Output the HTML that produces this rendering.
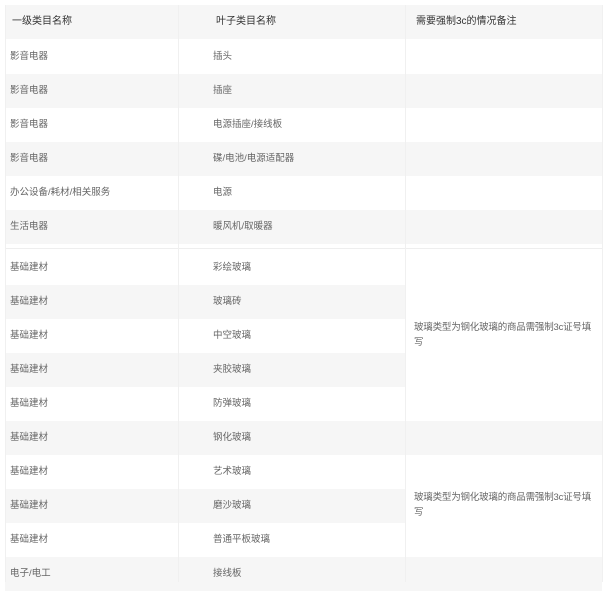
<!DOCTYPE html>
<html><head><meta charset="utf-8"><style>
body{margin:0;background:#fff;width:608px;height:582px;overflow:hidden;font-family:"Liberation Sans","Noto Sans CJK SC",sans-serif;}
.r{position:absolute;left:5px;width:597px;height:34px;}
.g{background:#f6f6f6}
.c{position:absolute;top:0;height:34px;line-height:34px;font-size:9.5px;color:#666;white-space:nowrap}
.c1{left:5px}.c2{left:208px}.c3{left:413px}
.vl{position:absolute;width:1px;background:#f0f0f0}
.m{position:absolute;left:405px;width:197px;background:#fff;font-size:9.5px;color:#666;line-height:15px;padding:0 0 0 9px;box-sizing:border-box;letter-spacing:-0.2px;white-space:nowrap}
</style></head><body>
<div class="r g" style="top:5px;height:34px;"><div class="c c1" style="color:#333;font-size:10px;left:7px">一级类目名称</div><div class="c c2" style="color:#333;font-size:10px;left:211px">叶子类目名称</div><div class="c c3" style="color:#333;font-size:10px;left:411px">需要强制3c的情况备注</div></div>
<div class="r" style="top:40px"><div class="c c1">影音电器</div><div class="c c2">插头</div></div>
<div class="r g" style="top:74px"><div class="c c1">影音电器</div><div class="c c2">插座</div></div>
<div class="r" style="top:108px"><div class="c c1">影音电器</div><div class="c c2">电源插座/接线板</div></div>
<div class="r g" style="top:142px"><div class="c c1">影音电器</div><div class="c c2">碟/电池/电源适配器</div></div>
<div class="r" style="top:176px"><div class="c c1">办公设备/耗材/相关服务</div><div class="c c2">电源</div></div>
<div class="r g" style="top:210px"><div class="c c1">生活电器</div><div class="c c2">暖风机/取暖器</div></div>
<div style="position:absolute;top:248px;left:5px;width:597px;height:1px;background:#eee"></div>
<div class="r" style="top:251px"><div class="c c1">基础建材</div><div class="c c2">彩绘玻璃</div></div>
<div class="r g" style="top:285px"><div class="c c1">基础建材</div><div class="c c2">玻璃砖</div></div>
<div class="r" style="top:319px"><div class="c c1">基础建材</div><div class="c c2">中空玻璃</div></div>
<div class="r g" style="top:353px"><div class="c c1">基础建材</div><div class="c c2">夹胶玻璃</div></div>
<div class="r" style="top:387px"><div class="c c1">基础建材</div><div class="c c2">防弹玻璃</div></div>
<div class="r g" style="top:421px"><div class="c c1">基础建材</div><div class="c c2">钢化玻璃</div></div>
<div class="r" style="top:455px"><div class="c c1">基础建材</div><div class="c c2">艺术玻璃</div></div>
<div class="r g" style="top:489px"><div class="c c1">基础建材</div><div class="c c2">磨沙玻璃</div></div>
<div class="r" style="top:523px"><div class="c c1">基础建材</div><div class="c c2">普通平板玻璃</div></div>
<div class="r g" style="top:557px"><div class="c c1">电子/电工</div><div class="c c2">接线板</div></div>
<div class="m" style="top:251px;height:170px;padding-top:69px">玻璃类型为钢化玻璃的商品需强制3c证号填<br>写</div>
<div class="m" style="top:455px;height:101px;padding-top:35px">玻璃类型为钢化玻璃的商品需强制3c证号填<br>写</div>
<div class="vl" style="left:178px;top:5px;height:577px"></div>
<div class="vl" style="left:405px;top:5px;height:577px"></div>
<div class="vl" style="left:5px;top:5px;height:577px"></div>
<div class="vl" style="left:602px;top:5px;height:577px"></div>
</body></html>
